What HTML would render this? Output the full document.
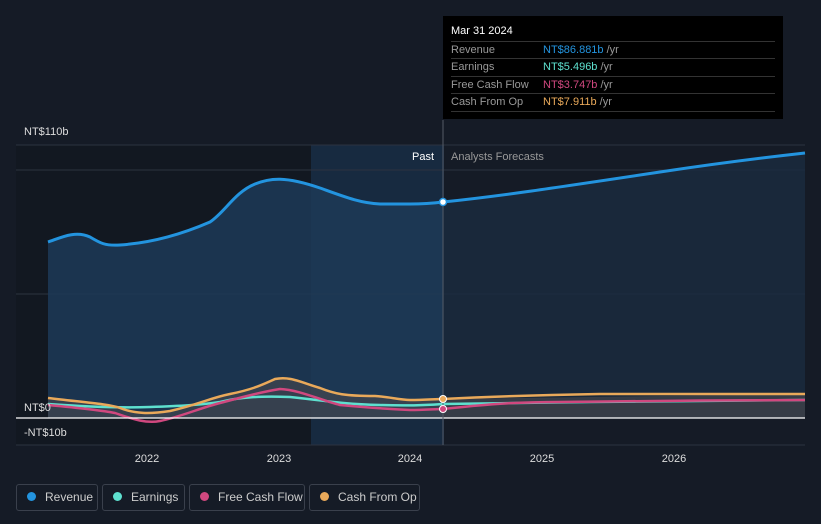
<!DOCTYPE html><html><head><style>
body{margin:0;background:#151b26;width:821px;height:524px;overflow:hidden;font-family:"Liberation Sans",sans-serif;}
.tt{position:absolute;left:443px;top:16px;width:340px;height:103px;background:#000;color:#fff;font-size:11px;}
.tt .r{position:absolute;left:8px;width:324px;border-top:1px solid #333;height:17px;line-height:17px;color:#999}
.tt .r b{font-weight:normal;position:absolute;left:92px}
.tt .r i{font-style:normal;color:#999}
.leg{position:absolute;top:484px;height:27px;border:1px solid #3a404c;border-radius:3px;color:#ccc;font-size:12px;line-height:25px;box-sizing:border-box;white-space:nowrap;overflow:hidden}
.leg span{display:inline-block;width:9px;height:9px;border-radius:50%;margin:0 9px 0 10px;vertical-align:0px}
</style></head><body>
<svg width="821" height="524" style="position:absolute;left:0;top:0">
<rect x="16" y="145" width="295" height="300" fill="#121821"/>
<rect x="311" y="145" width="133" height="300" fill="#172a40"/>
<line x1="16" y1="145" x2="805" y2="145" stroke="#2c3340"/>
<line x1="16" y1="170" x2="805" y2="170" stroke="#2c3340"/>
<line x1="16" y1="294" x2="805" y2="294" stroke="#2c3340"/>
<line x1="16" y1="445" x2="805" y2="445" stroke="#2c3340"/>
<path d="M48,242 C60,238 75,230 90,237 C100,243 105,246 120,245 C150,243 180,235 210,222 C225,212 235,192 255,184 C270,178 285,176 320,188 C345,197 360,203 380,204 L410,204 C425,204 435,203 443,202 L443,418 L48,418Z" fill="#1d3957" opacity=".85"/>
<path d="M443,202 C500,196 540,190 660,172 C720,163 760,158 805,153 L805,418 L443,418Z" fill="#1a2c40" opacity=".8"/>
<path d="M48,398 C80,402 110,404 120,408 C135,414 150,414 170,411 C200,404 230,393 250,390 C265,382 275,377 285,378 C300,380 320,388 340,394 C360,397 380,396 395,400 C410,401 430,399 443,399 L805,394 L805,418 L48,418Z" fill="#4a4a4e" opacity=".6"/>
<path d="M48,242 C60,238 75,230 90,237 C100,243 105,246 120,245 C150,243 180,235 210,222 C225,212 235,192 255,184 C270,178 285,176 320,188 C345,197 360,203 380,204 L410,204 C425,204 435,203 443,202 C500,196 540,190 660,172 C720,163 760,158 805,153" fill="none" stroke="#2394df" stroke-width="3"/>
<path d="M48,404 C90,407 120,408 150,407 C180,406 200,405 220,402 C240,397 260,396 290,397 C320,400 340,404 380,405 C410,406 430,405 443,404 C560,402 700,401 805,400" fill="none" stroke="#5ee0cf" stroke-width="2.5"/>
<path d="M48,405 C80,408 100,410 115,413 C130,418 145,424 160,421 C180,417 200,408 220,403 C240,398 255,393 280,389 C300,390 320,400 340,405 C370,408 390,409 410,410 C425,410 435,409 443,409 C480,405 510,402 560,402 C650,401 720,400 805,400" fill="none" stroke="#d0487f" stroke-width="2.5"/>
<path d="M48,398 C80,402 110,404 120,408 C135,414 150,414 170,411 C200,404 210,398 230,394 C250,390 260,386 275,379 C290,376 300,382 320,388 C335,394 345,396 375,396 C390,397 400,400 410,400 C425,400 435,399 443,399 C500,396 540,395 600,394 L805,394" fill="none" stroke="#e9a95a" stroke-width="2.5"/>
<line x1="16" y1="418" x2="805" y2="418" stroke="#fff" stroke-width="1.2"/>
<line x1="443" y1="120" x2="443" y2="445" stroke="#555b66"/>
<circle cx="443" cy="202" r="3.5" fill="#fff" stroke="#2394df" stroke-width="1.5"/>
<circle cx="443" cy="399" r="3.5" fill="#e9a95a" stroke="#fff" stroke-width="1"/>
<circle cx="443" cy="409" r="3.5" fill="#d0487f" stroke="#fff" stroke-width="1"/>
<g font-size="11" fill="#ddd">
<text x="24" y="135">NT$110b</text><text x="24" y="411">NT$0</text><text x="24" y="436">-NT$10b</text>
<text x="434" y="160" text-anchor="end" fill="#fff">Past</text><text x="451" y="160" fill="#999">Analysts Forecasts</text>
<text x="147" y="462" text-anchor="middle">2022</text><text x="279" y="462" text-anchor="middle">2023</text><text x="410" y="462" text-anchor="middle">2024</text><text x="542" y="462" text-anchor="middle">2025</text><text x="674" y="462" text-anchor="middle">2026</text>
</g></svg>
<div class="tt"><div style="position:absolute;left:8px;top:9px">Mar 31 2024</div>
<div class="r" style="top:25px">Revenue<b style="color:#2394df">NT$86.881b <i>/yr</i></b></div>
<div class="r" style="top:42px">Earnings<b style="color:#5ee0cf">NT$5.496b <i>/yr</i></b></div>
<div class="r" style="top:60px">Free Cash Flow<b style="color:#d0487f">NT$3.747b <i>/yr</i></b></div>
<div class="r" style="top:77px">Cash From Op<b style="color:#e9a95a">NT$7.911b <i>/yr</i></b></div>
<div class="r" style="top:95px;height:0"></div></div>
<div class="leg" style="left:16px;width:82px"><span style="background:#2394df"></span>Revenue</div>
<div class="leg" style="left:102px;width:83px"><span style="background:#5ee0cf"></span>Earnings</div>
<div class="leg" style="left:189px;width:116px"><span style="background:#d0487f"></span>Free Cash Flow</div>
<div class="leg" style="left:309px;width:111px"><span style="background:#e9a95a"></span>Cash From Op</div>
</body></html>
